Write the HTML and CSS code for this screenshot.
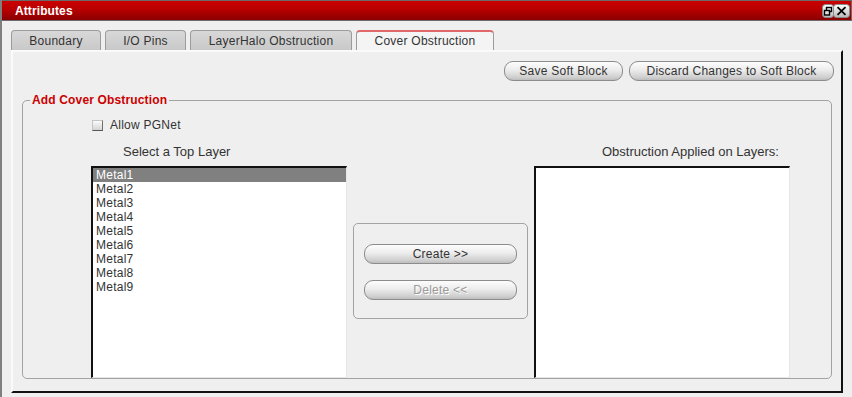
FILE: index.html
```html
<!DOCTYPE html>
<html>
<head>
<meta charset="utf-8">
<link rel="stylesheet" href="styles.css">
</head>
<body>
<div class="window">
  <div class="titlebar">
    <span class="title">Attributes</span>
    <svg class="title-btns" width="28" height="14" viewBox="0 0 28 14">
      <defs>
        <linearGradient id="tb" x1="0" y1="0" x2="0" y2="1">
          <stop offset="0" stop-color="#ffffff"/>
          <stop offset="1" stop-color="#b8b8b8"/>
        </linearGradient>
      </defs>
      <rect x="0.5" y="0.5" width="11" height="13" rx="3" fill="url(#tb)" stroke="#8a8a8a"/>
      <rect x="4.5" y="3.5" width="5" height="4" fill="none" stroke="#000" stroke-width="1.4"/>
      <rect x="2.5" y="6.5" width="5" height="4.5" fill="#e4e4e4" stroke="#000" stroke-width="1.4"/>
      <rect x="11.5" y="0.5" width="16" height="13" rx="3" fill="url(#tb)" stroke="#8a8a8a"/>
      <path d="M15.5 3.2 L23.5 10.8 M23.5 3.2 L15.5 10.8" stroke="#000" stroke-width="1.8"/>
    </svg>
  </div>
  <div class="content">
    <div class="tabs">
      <div class="tab w-boundary">Boundary</div>
      <div class="tab w-io">I/O Pins</div>
      <div class="tab w-halo">LayerHalo Obstruction</div>
      <div class="tab w-cover active">Cover Obstruction</div>
    </div>
    <div class="panel">
      <div class="toolbar">
        <button class="btn w-save">Save Soft Block</button>
        <button class="btn w-discard">Discard Changes to Soft Block</button>
      </div>
      <div class="group">
        <span class="legend">Add Cover Obstruction</span>
        <label class="check"><span class="box"></span><span>Allow PGNet</span></label>
        <div class="lists">
          <div class="lbl lbl-left">Select a Top Layer</div>
          <div></div>
          <div class="lbl lbl-right">Obstruction Applied on Layers:</div>
          <ul class="list">
            <li class="sel">Metal1</li>
            <li>Metal2</li>
            <li>Metal3</li>
            <li>Metal4</li>
            <li>Metal5</li>
            <li>Metal6</li>
            <li>Metal7</li>
            <li>Metal8</li>
            <li>Metal9</li>
          </ul>
          <div class="midbox">
            <button class="btn w-mid">Create &gt;&gt;</button>
            <button class="btn w-mid disabled">Delete &lt;&lt;</button>
          </div>
          <ul class="list"></ul>
        </div>
      </div>
    </div>
  </div>
</div>
</body>
</html>
```

FILE: styles.css
```css
* { box-sizing: border-box; }
html, body { margin: 0; padding: 0; }
body {
  width: 852px;
  height: 397px;
  overflow: hidden;
  background: #efefef;
  font-family: "Liberation Sans", Arial, sans-serif;
  font-size: 12px;
  letter-spacing: 0.25px;
  color: #333;
}
.window {
  height: 397px;
  border-left: 2px solid #7f7f7f;
  display: flex;
  flex-direction: column;
}
.titlebar {
  height: 21px;
  flex: none;
  border-top: 1px solid #6a6a6a;
  border-bottom: 1px solid #6a6a6a;
  border-right: 1px solid #6a6a6a;
  background: linear-gradient(#c90000, #b80000 45%, #8a0000);
  display: flex;
  align-items: center;
  padding: 0 1px 0 13px;
}
.title {
  flex: 1;
  color: #fff;
  font-weight: bold;
  font-size: 12px;
  letter-spacing: 0.1px;
}
.title-btns { display: block; }
.content {
  padding: 9px 0 0 9px;
}
.tabs {
  display: flex;
  gap: 4px;
  height: 20px;
}
.tab {
  height: 20px;
  border: 1px solid #9c9c9c;
  border-bottom: none;
  border-radius: 4px 4px 0 0;
  background: linear-gradient(#d8d8d8, #c9c9c9);
  display: flex;
  align-items: center;
  justify-content: center;
  padding-top: 1px;
  color: #333;
}
.tab.active {
  background: #f4f4f4;
  border-top: 2px solid #e06868;
  padding-top: 0;
}
.w-boundary { width: 90px; }
.w-io { width: 81px; }
.w-halo { width: 162px; }
.w-cover { width: 138px; }
.panel {
  width: 832px;
  height: 343px;
  border-top: 2px solid #fafafa;
  border-left: 2px solid #fafafa;
  border-right: 2px solid #111;
  border-bottom: 2px solid #111;
  display: flex;
  flex-direction: column;
}
.toolbar {
  display: flex;
  justify-content: flex-end;
  gap: 6px;
  padding: 9px 7px 0 0;
}
.btn {
  height: 20px;
  border: 1px solid #8c8c8c;
  border-radius: 9px;
  background: linear-gradient(#fdfdfd, #ececec 45%, #cfcfcf 85%, #bdbdbd);
  font-family: "Liberation Sans", Arial, sans-serif;
  font-size: 12px;
  letter-spacing: 0.25px;
  color: #333;
  padding: 0;
  display: flex;
  align-items: center;
  justify-content: center;
}
.btn.disabled {
  color: #9a9a9a;
  text-shadow: 1px 1px 0 #fff;
}
.w-save { width: 119px; }
.w-discard { width: 205px; }
.w-mid { width: 153px; }
.group {
  position: relative;
  margin: 19px 9px 0 9px;
  height: 279px;
  border: 1px solid #a3a3a3;
  border-radius: 5px;
}
.legend {
  position: absolute;
  top: -8px;
  left: 7px;
  padding: 0 2px;
  line-height: 14px;
  background: #efefef;
  color: #cc0000;
  font-weight: bold;
  letter-spacing: 0.15px;
}
.check {
  display: flex;
  align-items: center;
  gap: 7px;
  margin: 18px 0 0 69px;
  height: 12px;
  color: #333;
}
.box {
  width: 11px;
  height: 11px;
  border: 1px solid;
  border-color: #c4c4c4 #6f6f6f #555 #c4c4c4;
  background: linear-gradient(#fbfbfb, #d4d4d4);
}
.lists {
  display: grid;
  grid-template-columns: 256px 175px 256px;
  grid-template-rows: 14px 212px;
  column-gap: 6px;
  row-gap: 7px;
  margin: 14px 0 0 68px;
}
.lbl { line-height: 14px; color: #333; font-size: 13px; letter-spacing: 0; }
.lbl-left { padding-left: 32px; }
.lbl-right { text-align: right; padding-right: 11px; }
.list {
  list-style: none;
  margin: 0;
  padding: 0;
  background: #fff;
  border-top: 2px solid #111;
  border-left: 2px solid #111;
  border-right: 1px solid #e6e6e6;
  border-bottom: 1px solid #e6e6e6;
}
.list li {
  height: 14px;
  line-height: 14px;
  padding-left: 3px;
  color: #333;
}
.list li.sel {
  background: #808080;
  color: #fff;
}
.midbox {
  align-self: start;
  margin-top: 57px;
  height: 96px;
  border: 1px solid #a3a3a3;
  border-radius: 5px;
  display: flex;
  flex-direction: column;
  gap: 16px;
  padding: 20px 0 0 10px;
}
```
